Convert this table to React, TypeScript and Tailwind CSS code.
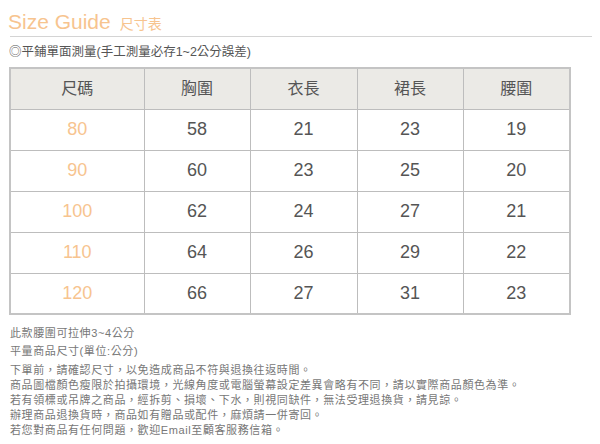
const headers = ["尺碼", "胸圍", "衣長", "裙長", "腰圍"];

const rows = [
  ["80", "58", "21", "23", "19"],
  ["90", "60", "23", "25", "20"],
  ["100", "62", "24", "27", "21"],
  ["110", "64", "26", "29", "22"],
  ["120", "66", "27", "31", "23"],
];

const colWidths = ["w-[134px]", "w-[106px]", "w-[107px]", "w-[106px]", "w-[107px]"];

const notes = [
  "下單前，請確認尺寸，以免造成商品不符與退換往返時間。",
  "商品圖檔顏色瘦限於拍攝環境，光線角度或電腦螢幕設定差異會略有不同，請以實際商品顏色為準。",
  "若有領標或吊牌之商品，經拆剪、損壞、下水，則視同缺件，無法受理退換貨，請見諒。",
  "辦理商品退換貨時，商品如有贈品或配件，麻煩請一併寄回。",
  "若您對商品有任何問題，歡迎Email至顧客服務信箱。",
];

export default function App() {
  return (
    <div className="w-[600px] h-[444px] bg-white font-['Liberation_Sans','Noto_Sans_CJK_TC',sans-serif] overflow-hidden">
      <div className="pl-[8px] pt-[9px] flex items-baseline gap-[9px] text-[#f7c48f]">
        <span className="text-[21px] leading-[25px]">Size Guide</span>
        <span className="text-[14px]">尺寸表</span>
      </div>
      <div className="ml-[10px] mr-[8px] mt-[1px] border-t border-[#d4d4d4]" />
      <div className="pl-[9px] mt-[7px] text-[12.5px] leading-[16px] text-[#555]">
        ◎平鋪單面測量(手工測量必存1~2公分誤差)
      </div>
      <table className="ml-[9px] mt-[7px] border-collapse border-2 border-[#c4c4c4]">
        <thead>
          <tr className="bg-[#ebeae6]">
            {headers.map((h, i) => (
              <th
                key={h}
                className={`${colWidths[i]} h-[41px] p-0 border border-[#bdbdbd] text-[16px] font-normal text-[#555] text-center`}
              >
                {h}
              </th>
            ))}
          </tr>
        </thead>
        <tbody>
          {rows.map((r) => (
            <tr key={r[0]}>
              {r.map((c, i) => (
                <td
                  key={i}
                  className={`h-[41px] p-0 border border-[#bdbdbd] text-[18px] text-center ${
                    i === 0 ? "text-[#f7c48f]" : "text-[#555]"
                  }`}
                >
                  {c}
                </td>
              ))}
            </tr>
          ))}
        </tbody>
      </table>
      <div className="pl-[10px] mt-[10px] text-[11px] tracking-[0.6px] text-[#777]">
        <div className="leading-[17px]">此款腰圍可拉伸3~4公分</div>
        <div className="leading-[18px]">平量商品尺寸(單位:公分)</div>
        <div className="mt-[3px]">
          {notes.map((n) => (
            <div key={n} className="leading-[15px]">
              {n}
            </div>
          ))}
        </div>
      </div>
    </div>
  );
}
